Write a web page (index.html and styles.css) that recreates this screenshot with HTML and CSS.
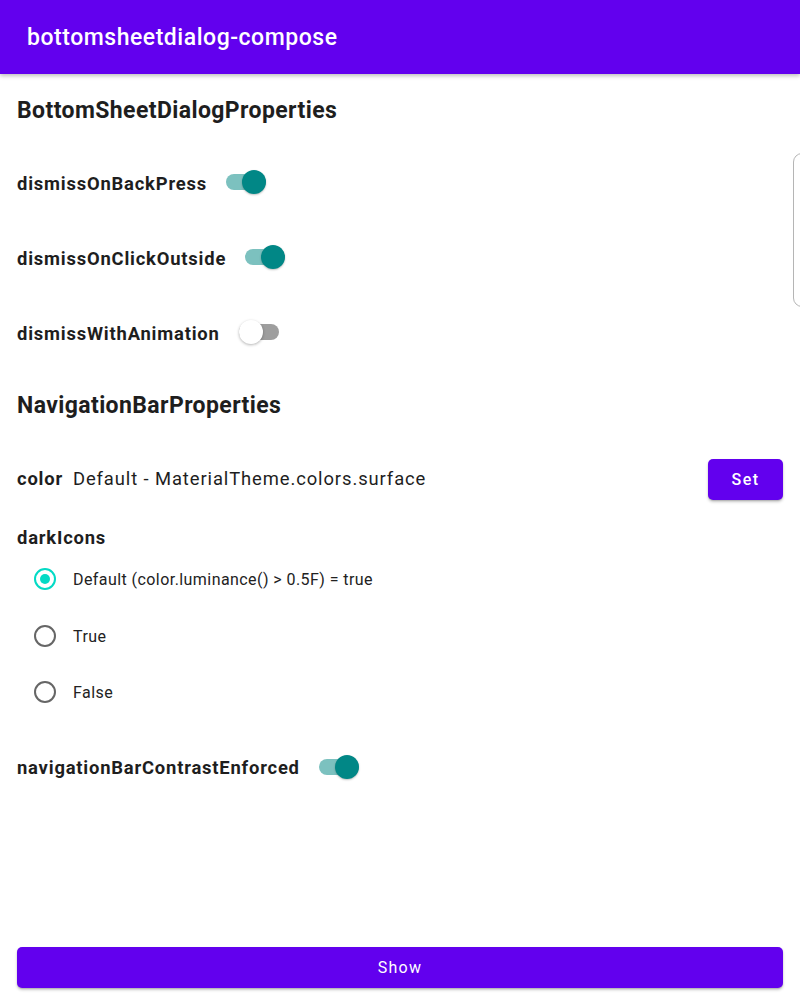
FILE: index.html
```html
<!DOCTYPE html>
<html>
<head>
<meta charset="utf-8">
<link rel="stylesheet" href="styles.css">
</head>
<body>
<div class="screen">
  <header class="appbar"><span class="appbar-title">bottomsheetdialog-compose</span></header>
  <main class="content">
    <h2 class="section-title first">BottomSheetDialogProperties</h2>
    <div class="switch-row">
      <span class="label">dismissOnBackPress</span>
      <span class="switch on"><span class="track"></span><span class="thumb"></span></span>
    </div>
    <div class="switch-row">
      <span class="label">dismissOnClickOutside</span>
      <span class="switch on"><span class="track"></span><span class="thumb"></span></span>
    </div>
    <div class="switch-row">
      <span class="label">dismissWithAnimation</span>
      <span class="switch off"><span class="track"></span><span class="thumb"></span></span>
    </div>

    <h2 class="section-title second">NavigationBarProperties</h2>
    <div class="color-row">
      <span class="label">color</span>
      <span class="value">Default - MaterialTheme.colors.surface</span>
      <button class="btn btn-set">Set</button>
    </div>
    <div class="label dark-icons">darkIcons</div>
    <div class="radio-group">
      <div class="radio-row"><span class="radio selected"></span><span class="radio-label">Default (color.luminance() &gt; 0.5F) = true</span></div>
      <div class="radio-row"><span class="radio"></span><span class="radio-label">True</span></div>
      <div class="radio-row"><span class="radio"></span><span class="radio-label">False</span></div>
    </div>
    <div class="switch-row contrast">
      <span class="label">navigationBarContrastEnforced</span>
      <span class="switch on"><span class="track"></span><span class="thumb"></span></span>
    </div>
  </main>
  <div class="footer">
    <button class="btn btn-show">Show</button>
  </div>
  <div class="scroll-hint"></div>
</div>
</body>
</html>
```

FILE: styles.css
```css
* { box-sizing: border-box; }
html, body { margin: 0; padding: 0; }
body {
  font-family: Roboto, "Noto Sans", "Liberation Sans", sans-serif;
  color: #1e1e1e;
  background: #ffffff;
}
.screen {
  position: relative;
  min-height: 1005px;
  display: flex;
  flex-direction: column;
  overflow: hidden;
}
.appbar {
  height: 74px;
  background: #6200ee;
  display: flex;
  align-items: center;
  padding-left: 27px;
  box-shadow: 0 2px 4px rgba(0,0,0,0.25);
  position: relative;
  z-index: 1;
}
.appbar-title {
  color: #ffffff;
  font-size: 23px;
  font-weight: 500;
  letter-spacing: 0.53px;
  line-height: 30px;
  margin-top: 2px;
}
.content {
  padding: 0 17px;
  display: flex;
  flex-direction: column;
  align-items: stretch;
}
.section-title {
  margin: 0;
  font-size: 23px;
  font-weight: 700;
  line-height: 30px;
  letter-spacing: 0.4px;
}
.section-title.first { margin-top: 22px; margin-bottom: 20px; }
.section-title.second { margin-top: 20px; }
.label {
  font-size: 18.4px;
  font-weight: 700;
  letter-spacing: 0.8px;
  line-height: 26px;
}
.switch-row {
  height: 75px;
  display: flex;
  align-items: center;
  gap: 19px;
}
.switch {
  position: relative;
  width: 40px;
  height: 24px;
  flex: none;
  margin-top: -3px;
}
.switch .track {
  position: absolute;
  left: 0;
  right: 0;
  top: 4px;
  height: 16px;
  border-radius: 8px;
}
.switch .thumb {
  position: absolute;
  top: 0;
  width: 24px;
  height: 24px;
  border-radius: 50%;
  box-shadow: 0 1px 2px rgba(0,0,0,0.25);
}
.switch.on .track { background: #7cc1bf; }
.switch.on .thumb { left: 16px; background: #018786; }
.switch.off .track { background: #9e9e9e; }
.switch.off .thumb { left: 0; background: #ffffff; box-shadow: 0 1px 3px rgba(0,0,0,0.3); }

.color-row {
  margin-top: 34px;
  height: 48px;
  display: flex;
  align-items: center;
}
.color-row .value {
  margin-left: 10px;
  font-size: 18.4px;
  letter-spacing: 0.9px;
  line-height: 26px;
  flex: 1;
}
.btn {
  border: none;
  background: #6200ee;
  color: #ffffff;
  font-family: Roboto, "Noto Sans", "Liberation Sans", sans-serif;
  font-size: 16px;
  font-weight: 500;
  letter-spacing: 1.4px;
  border-radius: 5px;
  height: 41px;
  box-shadow: 0 2px 3px rgba(0,0,0,0.22), 0 1px 1px rgba(0,0,0,0.12);
  cursor: pointer;
}
.btn-set { width: 75px; }
.dark-icons { margin-top: 22px; }
.radio-group { display: flex; flex-direction: column; }
.radio-row {
  height: 56.5px;
  display: flex;
  align-items: center;
}
.radio {
  width: 22px;
  height: 22px;
  border-radius: 50%;
  border: 2px solid #666666;
  margin-left: 17px;
  margin-right: 17px;
  flex: none;
  display: flex;
  align-items: center;
  justify-content: center;
}
.radio.selected { border-color: #03dac5; }
.radio.selected::after {
  content: "";
  width: 10px;
  height: 10px;
  border-radius: 50%;
  background: #03dac5;
}
.radio-label {
  font-size: 16px;
  letter-spacing: 0.43px;
  line-height: 22px;
  color: #222222;
  margin-top: 2px;
}
.switch-row.contrast { height: 48px; margin-top: 23.5px; }
.footer {
  margin-top: auto;
  padding: 0 17px 17px;
}
.btn-show { width: 100%; display: block; font-weight: 400; letter-spacing: 1.2px; }
.scroll-hint {
  position: absolute;
  top: 153px;
  left: 793px;
  width: 20px;
  height: 154px;
  border: 1px solid #b5b5b5;
  border-radius: 9px;
}
```
